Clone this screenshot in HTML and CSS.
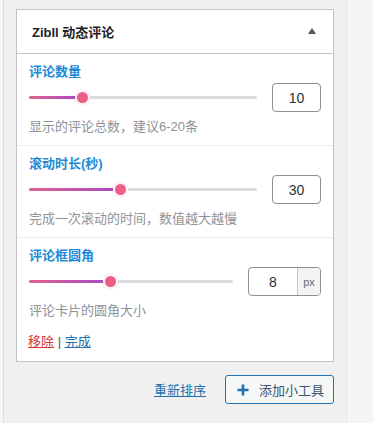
FILE: index.html
```html
<!DOCTYPE html>
<html lang="zh-CN">
<head>
    <meta charset="UTF-8">
    <meta name="viewport" content="width=device-width, initial-scale=1.0">
    <title>Zibll 动态评论</title>
    <link rel="stylesheet" href="styles.css">
</head>
<body>
    <div class="sidebarArea">
        <div class="widget">
            <div class="widget-top">
                <h3>Zibll 动态评论</h3>
                <span class="toggle-arrow"></span>
            </div>

            <div class="field">
                <label class="field-label">评论数量</label>
                <div class="field-row">
                    <div class="range"><div class="range-fill" style="width: 23.2%"></div></div>
                    <div class="num-box"><input type="text" value="10"></div>
                </div>
                <p class="field-desc">显示的评论总数，建议6-20条</p>
            </div>

            <div class="field">
                <label class="field-label">滚动时长(秒)</label>
                <div class="field-row">
                    <div class="range"><div class="range-fill" style="width: 40%"></div></div>
                    <div class="num-box"><input type="text" value="30"></div>
                </div>
                <p class="field-desc">完成一次滚动的时间，数值越大越慢</p>
            </div>

            <div class="field last">
                <label class="field-label">评论框圆角</label>
                <div class="field-row">
                    <div class="range"><div class="range-fill" style="width: 39.7%"></div></div>
                    <div class="num-box with-unit"><input type="text" value="8"><span class="unit">px</span></div>
                </div>
                <p class="field-desc">评论卡片的圆角大小</p>
            </div>

            <div class="widget-actions">
                <a href="#" class="link-delete">移除</a> <span class="sep">|</span> <a href="#" class="link-done">完成</a>
            </div>
        </div>

        <div class="sidebar-footer">
            <a href="#" class="link-reorder">重新排序</a>
            <button class="btn-add">
                <svg width="12" height="12" viewBox="0 0 12 12"><path d="M6 0.5v11M0.5 6h11" stroke="#2271b1" stroke-width="2.6"/></svg>
                添加小工具
            </button>
        </div>
    </div>
</body>
</html>
```

FILE: styles.css
```css
body {
    margin: 0;
    background: #f4f4f5;
    font-family: "Liberation Sans", "Noto Sans CJK SC", sans-serif;
    font-size: 13px;
    color: #1d2327;
}

.sidebarArea {
    margin-left: 3px;
    width: 318px;
    min-height: 423px;
    padding: 9px 12px 0 12px;
    background: #f0f0f1;
    border-left: 1px solid #dcdcde;
    border-right: 1px solid #e6e6e7;
}

.widget {
    background: #ffffff;
    border: 1px solid #c3c4c7;
}

.widget-top {
    height: 43px;
    display: flex;
    align-items: center;
    justify-content: space-between;
    padding: 0 17px 0 15px;
    border-bottom: 1px solid #c3c4c7;
}

.widget-top h3 {
    margin: 0;
    font-size: 13px;
    font-weight: bold;
    color: #1d2327;
}

.toggle-arrow {
    width: 0;
    height: 0;
    border-left: 4px solid transparent;
    border-right: 4px solid transparent;
    border-bottom: 6px solid #50575e;
    margin-top: -2px;
}

.field {
    padding: 9px 12px 9px 12px;
    border-bottom: 1px solid #ececec;
}

.field.last {
    border-bottom: none;
    padding-bottom: 10px;
}

.field-label {
    display: block;
    font-weight: bold;
    line-height: 18px;
    color: #1e8ad6;
}

.field-row {
    display: flex;
    align-items: center;
    gap: 15px;
    margin-top: 2px;
}

.range {
    flex: 1;
    height: 3px;
    background: #dddddd;
    border-radius: 2px;
    position: relative;
}

.range-fill {
    height: 100%;
    border-radius: 2px;
    background: linear-gradient(90deg, #e2628f, #a448c4);
    position: relative;
}

/* thumb */
.range-fill::after {
    content: "";
    position: absolute;
    right: -6px;
    top: -4px;
    width: 11px;
    height: 11px;
    border-radius: 50%;
    background: #ec5f85;
    box-shadow: 0 0 0 3px rgba(236, 95, 133, 0.08), 0 0 0 2px #fff;
}

.num-box {
    display: flex;
    height: 29px;
    width: 49px;
    box-sizing: border-box;
    border: 1px solid #8c8f94;
    border-radius: 4px;
    overflow: hidden;
}

.num-box input {
    width: 100%;
    border: none;
    padding: 0;
    text-align: center;
    font-family: "Liberation Sans", sans-serif;
    font-size: 14px;
    color: #2c3338;
    background: transparent;
    outline: none;
}

.num-box.with-unit {
    width: 73px;
}

.num-box.with-unit input {
    width: 48px;
}

.unit {
    width: 24px;
    border-left: 1px solid #c3c4c7;
    background: #f3f3f4;
    color: #646970;
    font-size: 11px;
    display: flex;
    align-items: center;
    justify-content: center;
}

.field-desc {
    margin: 6px 0 0 0;
    line-height: 18px;
    color: #8f9296;
}

.widget-actions {
    padding: 3px 12px 10px 11px;
    line-height: 18px;
    color: #50575e;
}

.widget-actions a {
    text-decoration: underline;
}

.link-delete {
    color: #d63638;
}

.link-done {
    color: #2271b1;
}

.sep {
    color: #50575e;
}

.sidebar-footer {
    display: flex;
    justify-content: flex-end;
    align-items: center;
    gap: 19px;
    margin-top: 13px;
}

.link-reorder {
    color: #2271b1;
    text-decoration: underline;
}

.btn-add {
    height: 29px;
    width: 109px;
    display: flex;
    align-items: center;
    justify-content: center;
    gap: 10px;
    padding: 0 0 0 2px;
    border: 1px solid #2271b1;
    border-radius: 3px;
    background: #f6f7f7;
    color: #3d5670;
    font-family: "Liberation Sans", "Noto Sans CJK SC", sans-serif;
    font-size: 13px;
    cursor: pointer;
}
```
